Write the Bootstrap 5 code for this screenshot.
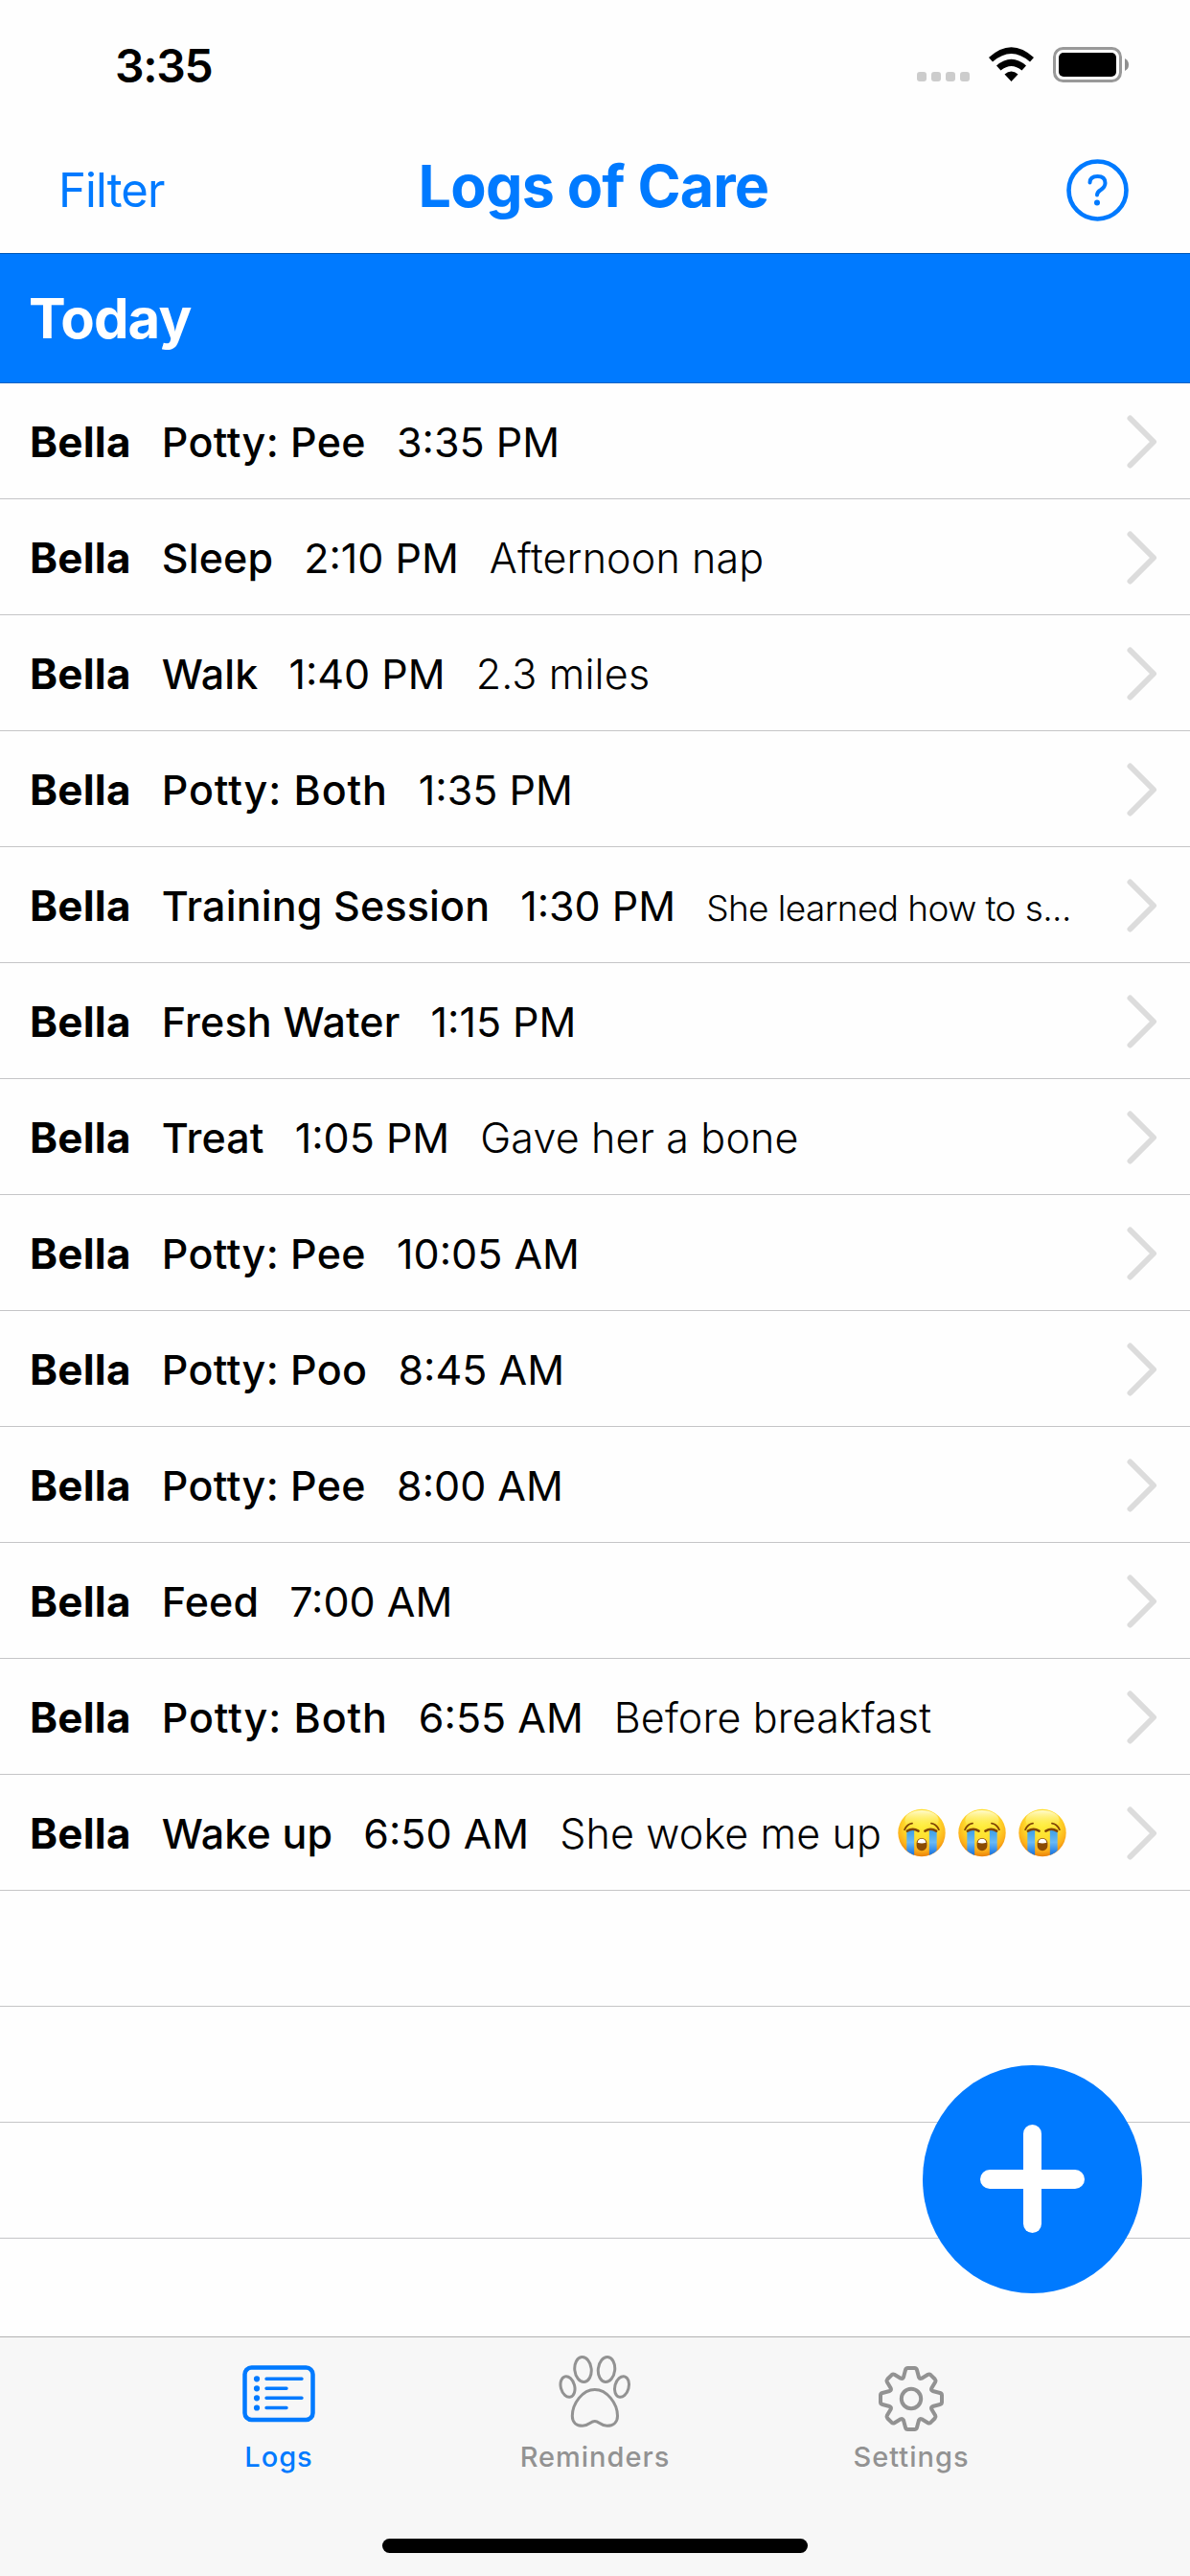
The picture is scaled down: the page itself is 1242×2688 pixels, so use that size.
<!DOCTYPE html>
<html lang="en">
<head>
<meta charset="utf-8">
<meta name="viewport" content="width=device-width, initial-scale=1">
<title>Logs of Care</title>
<link rel="stylesheet" href="https://cdn.jsdelivr.net/npm/bootstrap@5.3.0/dist/css/bootstrap.min.css">
<style>
:root{--ios-blue:#007aff}
body{font-family:Inter,"Liberation Sans",sans-serif;background:#fefefe;color:#000;width:1242px;height:2688px;overflow:hidden;line-height:1}
.status-bar{height:132px;padding:3px 64px 0 120px}
.clock{font-size:48px;font-weight:600;letter-spacing:-1.3px;margin-top:2px}
.top-nav{height:132px;padding:0 64px 0 61px;color:var(--ios-blue)}
.side{width:300px}
.filter-link{font-size:49px;letter-spacing:-.9px;color:var(--ios-blue)}
.title{font-size:61px;font-weight:700;letter-spacing:-.8px;margin-top:-7px}
.day-head{height:136px;padding-left:30px;background:var(--ios-blue);border-top:1px solid #0058b8;border-bottom:1px solid #0a63c4;color:#fff;font-size:58px;font-weight:700;letter-spacing:-.9px}
.list-group-flush>.log-row,.list-group-flush>.log-row:last-child{height:121px;border:0;border-bottom:1px solid #c5c5c7;border-radius:0;background:transparent;padding:1px 34px 0 31px;color:#000;font-size:43px}
.entry{gap:32px}
.pet{font-weight:700;font-size:44px;letter-spacing:.2px}
.act{font-weight:500;letter-spacing:.15px}
.act-potty{letter-spacing:.4px}
.act-both{letter-spacing:.9px}
.time{font-weight:400}
.note{font-weight:300;letter-spacing:.15px}
.note-sm{font-size:37px;letter-spacing:-.6px}
.emoji{width:50px;height:51px;margin-left:13px}
.fab{right:50px;top:2155px;width:229px;height:238px;border-radius:50%;background:var(--ios-blue)}
.tab-bar{height:250px;background:#f7f7f7;border-top:1px solid #b2b2b2}
.tabs{width:990px;height:160px}
.tab{width:330px;color:#929292;font-size:29px;font-weight:500;letter-spacing:1px}
.tab.active{color:var(--ios-blue)}
.icon-box{height:76px;margin-top:19px}
.tab-label{margin-top:15px}
.home-bar{width:444px;height:15px;margin-top:50px;background:#000}
</style>
</head>
<body class="d-flex flex-column">
<svg width="0" height="0" class="position-absolute" aria-hidden="true">
<defs>
<radialGradient id="face" cx=".5" cy=".33" r=".68"><stop offset="0" stop-color="#ffee38"/><stop offset=".5" stop-color="#ffdd2d"/><stop offset=".8" stop-color="#fdb01a"/><stop offset="1" stop-color="#e87d08"/></radialGradient>
<linearGradient id="shine" x2="0" y2="1"><stop offset="0" stop-color="#fffbd0"/><stop offset="1" stop-color="#fff04a" stop-opacity="0"/></linearGradient>
<linearGradient id="tear" x2="0" y2="1"><stop offset="0" stop-color="#3f9fe6"/><stop offset=".45" stop-color="#68b9f6"/><stop offset="1" stop-color="#0b68dc"/></linearGradient>
<clipPath id="round"><circle cx="25.500" cy="25.500" r="25"/></clipPath>
<symbol id="cry" viewBox="0 0 51 51">
<circle cx="25.500" cy="25.500" r="25.200" fill="url(#face)"/><ellipse cx="25.500" cy="12" rx="18" ry="10.500" fill="url(#shine)"/>
<g clip-path="url(#round)"><path d="M9.500 23h8v28h-8zM33.500 23h8v28h-8z" fill="url(#tear)"/></g>
<g fill="none" stroke="#804607" stroke-width="1.900" stroke-linecap="round"><path d="M7.300 22q3-6 8-6.500M43.700 22q-3-6-8-6.500"/><path stroke-width="2.600" d="M10 23.500q6-3.500 12 0M41 23.500q-6-3.500-12 0"/></g>
<rect x="20" y="31" width="11" height="13.500" rx="5.300" fill="#8a4b04"/><path d="M21 36q.6-4 4.500-4t4.500 4q-4.500 1.600-9 0" fill="#fff"/>
</symbol>
<symbol id="chev" viewBox="0 0 32 56"><path d="M3.500 3.500L28 28L3.500 52.500" fill="none" stroke="#dcdcdc" stroke-width="6" stroke-linecap="round" stroke-linejoin="round"/></symbol>
</defs>
</svg>

<header class="status-bar d-flex justify-content-between align-items-center flex-shrink-0">
<div class="clock">3:35</div>
<svg width="222" height="40" viewBox="956 48 222 40">
<g fill="#ccc"><rect x="957" y="75" width="10" height="10" rx="3"/><rect x="972" y="75" width="10" height="10" rx="3"/><rect x="987" y="75" width="10" height="10" rx="3"/><rect x="1002" y="75" width="10" height="10" rx="3"/></g>
<path d="M1032 60Q1055.500 38.500 1079 60L1075 64.500Q1055.500 47.500 1036 64.500zM1040 68.500Q1055.500 55 1071 68.500L1066.500 73.500Q1055.500 64.500 1044.500 73.500zM1048.500 77.500Q1055.500 71.500 1062.500 77.500L1055.500 85z"/>
<rect x="1100.500" y="50.500" width="69" height="34" rx="9" fill="none" stroke="#999" stroke-width="3"/><rect x="1105" y="55" width="60" height="25" rx="5"/><path d="M1174 61q4 2 4 6.500t-4 6.500z" fill="#8f8f8f"/>
</svg>
</header>

<nav class="top-nav d-flex justify-content-between align-items-center flex-shrink-0">
<div class="side"><a class="filter-link text-decoration-none" href="#">Filter</a></div>
<div class="title text-nowrap">Logs of Care</div>
<div class="side d-flex justify-content-end"><svg width="65" height="65" viewBox="0 0 65 65" fill="none" stroke="currentColor" stroke-linecap="round"><circle cx="32.500" cy="32.500" r="30" stroke-width="4.600"/><path d="M24.500 24.500Q24.500 18 32.500 18Q40.500 18 40.500 25Q40.500 29 36 32Q32 34.500 32 37.500" stroke-width="4"/><circle cx="32" cy="45.500" r="3" fill="currentColor" stroke="none"/></svg></div>
</nav>

<main class="flex-shrink-0 overflow-hidden" style="height:2174px">
<div class="day-head d-flex align-items-center">Today</div>
<div class="list-group list-group-flush">
<a class="list-group-item log-row d-flex align-items-center justify-content-between"><div class="entry d-flex align-items-baseline text-nowrap"><span class="pet">Bella</span><span class="act act-potty">Potty: Pee</span><span class="time">3:35 PM</span></div><svg width="32" height="56"><use href="#chev"/></svg></a>
<a class="list-group-item log-row d-flex align-items-center justify-content-between"><div class="entry d-flex align-items-baseline text-nowrap"><span class="pet">Bella</span><span class="act">Sleep</span><span class="time">2:10 PM</span><span class="note">Afternoon nap</span></div><svg width="32" height="56"><use href="#chev"/></svg></a>
<a class="list-group-item log-row d-flex align-items-center justify-content-between"><div class="entry d-flex align-items-baseline text-nowrap"><span class="pet">Bella</span><span class="act">Walk</span><span class="time">1:40 PM</span><span class="note">2.3 miles</span></div><svg width="32" height="56"><use href="#chev"/></svg></a>
<a class="list-group-item log-row d-flex align-items-center justify-content-between"><div class="entry d-flex align-items-baseline text-nowrap"><span class="pet">Bella</span><span class="act act-both">Potty: Both</span><span class="time">1:35 PM</span></div><svg width="32" height="56"><use href="#chev"/></svg></a>
<a class="list-group-item log-row d-flex align-items-center justify-content-between"><div class="entry d-flex align-items-baseline text-nowrap"><span class="pet">Bella</span><span class="act">Training Session</span><span class="time">1:30 PM</span><span class="note note-sm">She learned how to s...</span></div><svg width="32" height="56"><use href="#chev"/></svg></a>
<a class="list-group-item log-row d-flex align-items-center justify-content-between"><div class="entry d-flex align-items-baseline text-nowrap"><span class="pet">Bella</span><span class="act">Fresh Water</span><span class="time">1:15 PM</span></div><svg width="32" height="56"><use href="#chev"/></svg></a>
<a class="list-group-item log-row d-flex align-items-center justify-content-between"><div class="entry d-flex align-items-baseline text-nowrap"><span class="pet">Bella</span><span class="act">Treat</span><span class="time">1:05 PM</span><span class="note">Gave her a bone</span></div><svg width="32" height="56"><use href="#chev"/></svg></a>
<a class="list-group-item log-row d-flex align-items-center justify-content-between"><div class="entry d-flex align-items-baseline text-nowrap"><span class="pet">Bella</span><span class="act act-potty">Potty: Pee</span><span class="time">10:05 AM</span></div><svg width="32" height="56"><use href="#chev"/></svg></a>
<a class="list-group-item log-row d-flex align-items-center justify-content-between"><div class="entry d-flex align-items-baseline text-nowrap"><span class="pet">Bella</span><span class="act act-potty">Potty: Poo</span><span class="time">8:45 AM</span></div><svg width="32" height="56"><use href="#chev"/></svg></a>
<a class="list-group-item log-row d-flex align-items-center justify-content-between"><div class="entry d-flex align-items-baseline text-nowrap"><span class="pet">Bella</span><span class="act act-potty">Potty: Pee</span><span class="time">8:00 AM</span></div><svg width="32" height="56"><use href="#chev"/></svg></a>
<a class="list-group-item log-row d-flex align-items-center justify-content-between"><div class="entry d-flex align-items-baseline text-nowrap"><span class="pet">Bella</span><span class="act">Feed</span><span class="time">7:00 AM</span></div><svg width="32" height="56"><use href="#chev"/></svg></a>
<a class="list-group-item log-row d-flex align-items-center justify-content-between"><div class="entry d-flex align-items-baseline text-nowrap"><span class="pet">Bella</span><span class="act act-both">Potty: Both</span><span class="time">6:55 AM</span><span class="note">Before breakfast</span></div><svg width="32" height="56"><use href="#chev"/></svg></a>
<a class="list-group-item log-row d-flex align-items-center justify-content-between"><div class="d-flex align-items-center"><div class="entry d-flex align-items-baseline text-nowrap"><span class="pet">Bella</span><span class="act">Wake up</span><span class="time">6:50 AM</span><span class="note">She woke me up</span></div><div class="d-flex ms-1"><svg class="emoji"><use href="#cry"/></svg><svg class="emoji"><use href="#cry"/></svg><svg class="emoji"><use href="#cry"/></svg></div></div><svg width="32" height="56"><use href="#chev"/></svg></a>
<div class="list-group-item log-row"></div><div class="list-group-item log-row"></div><div class="list-group-item log-row"></div>
</div>
</main>

<button class="fab btn border-0 p-0 position-absolute" aria-label="Add log"><svg class="d-block" width="229" height="238" viewBox="0 0 229 238" fill="#fff"><rect x="60" y="109" width="109" height="20" rx="10"/><rect x="105" y="62" width="19" height="113" rx="9.500"/></svg></button>

<footer class="tab-bar d-flex flex-column align-items-center flex-shrink-0">
<div class="tabs d-flex">
<div class="tab active d-flex flex-column align-items-center"><div class="icon-box d-flex align-items-center pt-1"><svg width="76" height="60" viewBox="0 0 76 60" fill="none" stroke="currentColor" stroke-linecap="round"><rect x="2.500" y="2.500" width="71" height="54.500" rx="7" stroke-width="4.500"/><path stroke-width="3.400" d="M25 14.300H62M25 24.300H46M25 34.300H62M25 44.500H46"/><path stroke-width="6.200" d="M15 14.300h.01M15 24.300h.01M15 34.300h.01M15 44.500h.01"/></svg></div><div class="tab-label">Logs</div></div>
<div class="tab d-flex flex-column align-items-center"><div class="icon-box"><svg width="76" height="76" viewBox="0 0 76 76" fill="none" stroke="currentColor" stroke-width="3"><ellipse cx="25.500" cy="14.500" rx="8.700" ry="13" transform="rotate(-6 25.500 14.500)"/><ellipse cx="50" cy="14.500" rx="8.700" ry="13" transform="rotate(6 50 14.500)"/><ellipse cx="9.500" cy="32.500" rx="7.200" ry="11" transform="rotate(-15 9.500 32.500)"/><ellipse cx="66" cy="32.500" rx="7.200" ry="11" transform="rotate(15 66 32.500)"/><path d="M37.800 35.500C25 35.500 14.300 50 14.300 63C14.300 70 19 73.300 25 73.300C32 73.300 33 68.500 37.800 68.500C42.500 68.500 43.500 73.300 50.500 73.300C56.500 73.300 61.500 70 61.500 63C61.500 50 50.500 35.500 37.800 35.500Z"/></svg></div><div class="tab-label">Reminders</div></div>
<div class="tab d-flex flex-column align-items-center"><div class="icon-box d-flex align-items-end"><svg class="overflow-visible" width="68" height="72" viewBox="0 -7 68 72" fill="none" stroke="currentColor" stroke-width="4" stroke-linejoin="round"><circle cx="34" cy="34" r="10.200"/><path d="M28 4Q28.500 2 30.500 2H37.500Q39.500 2 40 4L42 11.500Q43 13.500 45 12.700L51.500 8.800Q53 8 54.500 9.300L58.700 13.500Q60 15 59.200 16.500L55.300 23Q54.500 25 56.500 26L64 28Q66 28.500 66 30.500V37.500Q66 39.500 64 40L56.500 42Q54.500 43 55.300 45L59.200 51.500Q60 53 58.700 54.500L54.500 58.700Q53 60 51.500 59.200L45 55.300Q43 54.500 42 56.500L40 64Q39.500 66 37.500 66H30.500Q28.500 66 28 64L26 56.500Q25 54.500 23 55.300L16.500 59.200Q15 60 13.500 58.700L9.300 54.500Q8 53 8.800 51.500L12.700 45Q13.500 43 11.500 42L4 40Q2 39.500 2 37.500V30.500Q2 28.500 4 28L11.500 26Q13.500 25 12.700 23L8.800 16.500Q8 15 9.300 13.500L13.500 9.300Q15 8 16.500 8.800L23 12.700Q25 13.500 26 11.500Z"/></svg></div><div class="tab-label">Settings</div></div>
</div>
<div class="home-bar rounded-pill"></div>
</footer>
<script src="https://cdn.jsdelivr.net/npm/bootstrap@5.3.0/dist/js/bootstrap.bundle.min.js"></script>
</body>
</html>
